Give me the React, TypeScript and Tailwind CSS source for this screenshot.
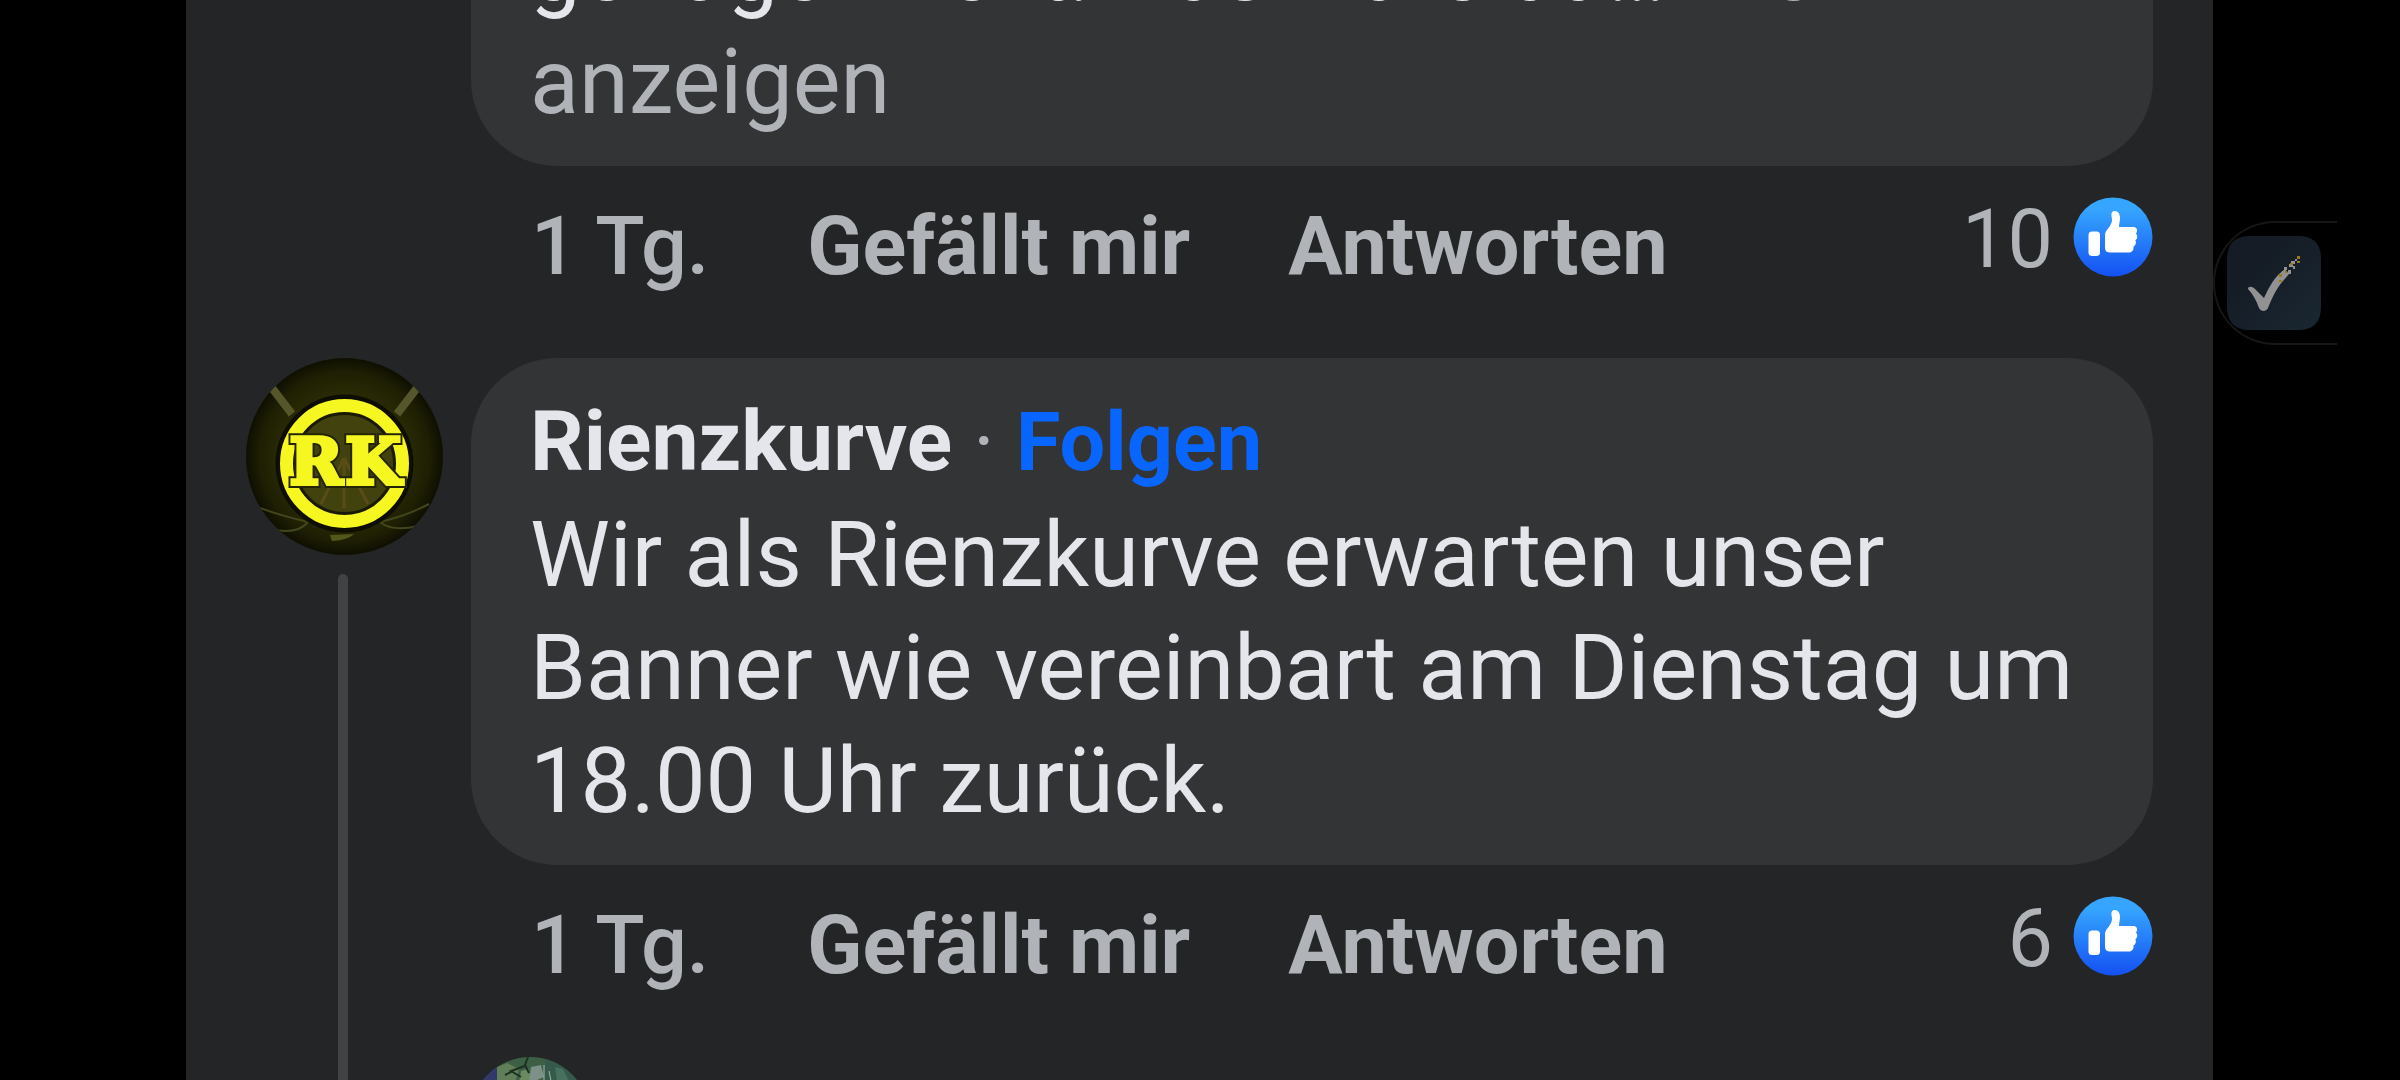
import React from "react";

interface Comment {
  id: number;
  author?: string;
  text: string;
  truncated?: boolean;
  likes: number;
}

const comments: Comment[] = [
  {
    id: 1,
    text: "genügen Text. Das wäre da… ",
    truncated: true,
    likes: 10,
  },
  {
    id: 2,
    author: "Rienzkurve",
    text: "Wir als Rienzkurve erwarten unser Banner wie vereinbart am Dienstag um 18.00 Uhr zurück.",
    likes: 6,
  },
];

const LikeBadge = () => (
  <svg viewBox="0 0 80 80" className="size-20 shrink-0" aria-hidden="true">
    <defs>
      <linearGradient id="like" x1="0" y1="0" x2="0" y2="1">
        <stop offset="0.15" stopColor="#35a5ff" />
        <stop offset="1" stopColor="#1450f2" />
      </linearGradient>
    </defs>
    <circle cx="40" cy="40" r="39.5" fill="url(#like)" />
    <rect x="15.5" y="34.5" width="11.5" height="24.5" rx="3.5" fill="#fff" />
    <path
      d="M42 14C45 14 47 17 47 21C47 24 46 27 46 30H60C63 30 64.5 32 64 34C63.8 35 63.5 36 63 36.5C65 39 64.5 42 62.5 43C63.5 46 62.5 48.5 60.5 49.5C61 53 59 55.5 56 55.5H37C34 55.5 32 54 32 51V38C32 33 38 30 39 24C39.3 21 38 19 38.5 16.5C39 14.5 40.5 14 42 14Z"
      fill="#fff"
    />
  </svg>
);

const ClubAvatar = () => (
  <svg viewBox="0 0 197 197" className="w-[197px] shrink-0" role="img" aria-label="Rienzkurve">
    <defs>
      <radialGradient id="club">
        <stop offset="0.6" stopColor="#2b2c04" />
        <stop offset="0.85" stopColor="#1f2003" />
        <stop offset="1" stopColor="#0f0f02" />
      </radialGradient>
      <clipPath id="clubClip">
        <circle cx="98.5" cy="98.5" r="98.5" />
      </clipPath>
    </defs>
    <g clipPath="url(#clubClip)">
      <rect width="197" height="197" fill="url(#club)" />
      <path d="M26 30L46 56M171 30L151 56" stroke="#55562a" strokeWidth="8" />
      <path
        d="M14 150Q36 158 62 164M30 172Q52 176 62 164M183 146Q160 158 134 164M172 168Q146 174 134 164"
        fill="none"
        stroke="#41471a"
        strokeWidth="2"
      />
      <path d="M84 177L108 176Q102 182 86 183Z" fill="#53581a" />
      <circle cx="98.5" cy="105.5" r="69" fill="#0e0d02" />
      <circle cx="98.5" cy="105.5" r="57" fill="#41420d" stroke="#f6f721" strokeWidth="15" />
      <circle cx="98.5" cy="105.5" r="50" fill="none" stroke="#1a1a03" strokeWidth="3" />
      <path d="M98 100L75 146M98 100L98 150M98 100L122 146" stroke="#5a4c19" strokeWidth="3" />
    </g>
    <g className="font-['DejaVu_Serif',serif] text-[64px] font-bold" textAnchor="middle">
      <text y="126" fill="#242503" stroke="#242503" strokeWidth="8">
        <tspan x="70">R</tspan>
        <tspan x="127">K</tspan>
      </text>
      <text y="126" fill="#f6f721" stroke="#f6f721" strokeWidth="4">
        <tspan x="70">R</tspan>
        <tspan x="127">K</tspan>
      </text>
    </g>
  </svg>
);

const ReplyAvatar = () => (
  <svg viewBox="0 0 118 118" className="w-[118px] shrink-0" role="img" aria-label="Avatar">
    <defs>
      <clipPath id="replyClip">
        <circle cx="59" cy="59" r="59" />
      </clipPath>
    </defs>
    <g clipPath="url(#replyClip)">
      <rect width="118" height="118" fill="#3c5f45" />
      <path d="M0 0H26V118H0Z" fill="#32386b" />
      <path d="M26 10L36 6L48 12L44 26H26Z" fill="#607f58" />
      <path d="M50 14L58 12L60 26H48Z" fill="#6c8a62" />
      <path d="M74 0H118V118H74Z" fill="#355a4c" />
      <path d="M84 10L92 12L98 24H86Z" fill="#47705f" />
      <path d="M60 10L70 8L73 20L64 24H58Z" fill="#7d9188" />
      <path d="M57 0L54 8L58 16M54 9L40 14L50 20M34 18L42 14" fill="none" stroke="#1c3020" strokeWidth="2" />
      <path d="M73 8V24M78 14L80 24" stroke="#a2b5ab" strokeWidth="1" />
    </g>
  </svg>
);

const CheckBubble = () => (
  <button
    type="button"
    aria-label="Open"
    className="mt-[221px] flex h-[124px] w-[124px] items-center rounded-l-full border-2 border-r-0 border-[#161616] pl-[11px]"
  >
    <svg viewBox="0 0 96 96" className="size-24" aria-hidden="true">
      <defs>
        <linearGradient id="tile" x1="0" y1="0" x2="1" y2="1">
          <stop offset="0.3" stopColor="#151c25" />
          <stop offset="1" stopColor="#1a2732" />
        </linearGradient>
      </defs>
      <path d="M24 1H72Q95 1 95 24V72Q95 95 72 95H24Q1 95 1 72V24Q1 1 24 1Z" fill="url(#tile)" />
      <path
        d="M22 54C22 51 26 51 29 54L38 63C42 54 47 45 53 39L59 34L63 39L57 46C50 54 46 63 42 73C40 77 35 77 33 73C30 65 27 59 22 54Z"
        fill="#929292"
      />
      <path
        d="M58 32h3v3h-3zM62 35h3v4h-3zM63 29h4v3h-4zM67 31h2v3h-2zM65 26h4v3h-4zM69 24h2v2h-2zM56 36h4v3h-4z"
        fill="#929292"
      />
      <path d="M71 21h3v3h-3zM71 26h3v2h-3zM64 28h3v2h-3zM59 36h2v2h-2zM53 39h3v3h-3zM53 45h3v2h-3z" fill="#9a7a17" />
    </svg>
  </button>
);

const CommentActions = ({ likes }: { likes: number }) => (
  <div className="flex items-start justify-between pt-7 pl-[60px]">
    <div className="flex gap-[98px] pt-1 text-[81px] leading-[98px] font-bold">
      <span className="font-medium">1 Tg.</span>
      <button type="button">Gefällt mir</button>
      <button type="button">Antworten</button>
    </div>
    <div className="flex items-start gap-5 pt-[3px] text-[81px] leading-[86px]">
      <span>{likes}</span>
      <LikeBadge />
    </div>
  </div>
);

const CommentBubble = ({ comment }: { comment: Comment }) => (
  <div className="rounded-[86px] bg-[#333436] px-[59px] pt-7 pb-[27px]">
    {comment.author && (
      <div className="flex items-baseline gap-[21px] text-[84px] leading-[112px] font-bold">
        <a href="#profile" className="text-[#e4e6eb]">
          {comment.author}
        </a>
        <span className="font-normal text-[#b0b3b8]">·</span>
        <button type="button" className="text-[81px] text-[#0866ff]">
          Folgen
        </button>
      </div>
    )}
    <p className="text-[90px] leading-[113px] text-[#e4e6eb]">
      {comment.text}
      {comment.truncated && (
        <a href="#more" className="text-[#b0b3b8]">
          Mehr anzeigen
        </a>
      )}
    </p>
  </div>
);

export default function App() {
  return (
    <div className="flex h-screen overflow-hidden bg-black font-[Roboto,sans-serif]">
      <main className="ml-[186px] min-w-0 flex-1 bg-[#242527] px-[60px] text-[#b0b3b8]">
        {/* scrolled list: the first comment runs out of the top */}
        <div className="flex h-[358px] flex-col justify-end pb-[62px] pl-[225px]">
          <CommentBubble comment={comments[0]} />
          <CommentActions likes={comments[0].likes} />
        </div>
        <div className="flex gap-7">
          <div className="flex flex-col items-center gap-[19px]">
            <ClubAvatar />
            <div className="mr-1 w-[10px] flex-1 rounded-t-full bg-[#414244]" />
          </div>
          <div className="min-w-0 flex-1">
            <CommentBubble comment={comments[1]} />
            <CommentActions likes={comments[1].likes} />
            <div className="pt-[62px]">
              <ReplyAvatar />
            </div>
          </div>
        </div>
      </main>
      <aside className="w-[187px] shrink-0">
        <CheckBubble />
      </aside>
    </div>
  );
}
